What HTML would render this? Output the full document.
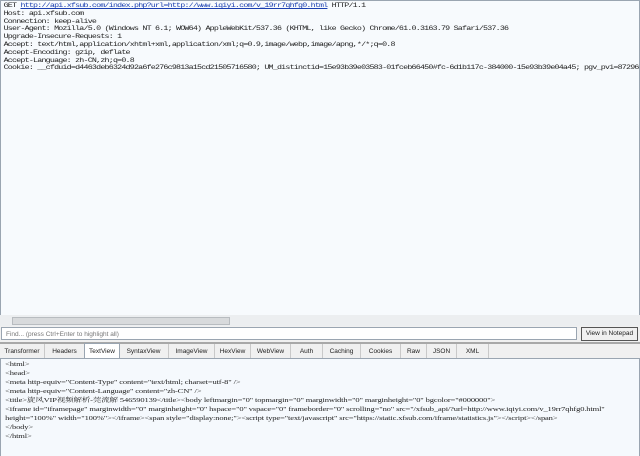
<!DOCTYPE html>
<html><head><meta charset="utf-8"><style>
body{margin:0;width:640px;height:456px;overflow:hidden;background:#f0f0f0;font-family:"Liberation Sans",sans-serif;position:relative}
.top{position:absolute;left:0;top:0;width:638px;height:314px;background:#f7fafd;border:1px solid #9aa5b1;overflow:hidden}
.top pre{margin:0;padding:1px 0 0 2px;font-family:"Liberation Mono",monospace;font-size:6.4px;line-height:7.8px;letter-spacing:-0.6px;color:#222;white-space:pre;transform:scaleX(1.3);transform-origin:0 0}
.top a{color:#1a3fb0;text-decoration:underline}
.sb{position:absolute;left:0;top:315px;width:640px;height:11px;background:#eceef0}
.thumb{position:absolute;left:12px;top:317px;width:216px;height:6px;background:#d8dadc;border:1px solid #b8bcc0}
.find{position:absolute;left:1px;top:327px;width:576px;height:13px;background:#fff;border:1px solid #9aa5b1;font-size:6.5px;color:#777;line-height:13px;padding-left:4px;box-sizing:border-box}
.btn{position:absolute;left:581px;top:327px;width:57px;height:14px;background:#f0f0f0;border:1px solid #555;box-sizing:border-box;font-size:6.5px;line-height:12px;text-align:center;color:#222}
.split{position:absolute;left:0;top:342px;width:640px;height:2px;background:#a8a8a8}
.tabs{position:absolute;left:0;top:344px;width:640px;height:14px;background:#f0f0f0;border-bottom:1px solid #9aa5b1}
.tab{position:absolute;top:0;height:14px;border-right:1px solid #c9c9c9;font-size:6.5px;line-height:15px;color:#222;text-align:center}
.sel{background:#fff;border:1px solid #9aa5b1;border-bottom:none;top:-1px}
.bot{position:absolute;left:0;top:359px;width:638px;height:97px;background:#f5f9fd;border-left:1px solid #9aa5b1;border-right:1px solid #9aa5b1;overflow:hidden}
.bot pre{margin:0;padding:0 0 0 3px;font-family:"Liberation Serif","Noto Serif CJK SC",serif;font-size:6.2px;line-height:9px;color:#222;white-space:pre;letter-spacing:-0.1px;transform:scaleX(1.37);transform-origin:0 0}
</style></head><body>
<div class="top"><pre>GET <a>http://api.xfsub.com/index.php?url=http://www.iqiyi.com/v_19rr7qhfg0.html</a> HTTP/1.1
Host: api.xfsub.com
Connection: keep-alive
User-Agent: Mozilla/5.0 (Windows NT 6.1; WOW64) AppleWebKit/537.36 (KHTML, like Gecko) Chrome/61.0.3163.79 Safari/537.36
Upgrade-Insecure-Requests: 1
Accept: text/html,application/xhtml+xml,application/xml;q=0.9,image/webp,image/apng,*/*;q=0.8
Accept-Encoding: gzip, deflate
Accept-Language: zh-CN,zh;q=0.8
Cookie: __cfduid=d4463deb6324d92a6fe276c9813a15cd21505716580; UM_distinctid=15e93b39e03583-01fceb66450#fc-6d1b117c-384000-15e93b39e04a45; pgv_pvi=87296</pre></div>
<div class="sb"></div><div class="thumb"></div>
<div class="find">Find... (press Ctrl+Enter to highlight all)</div>
<div class="btn">View in Notepad</div>
<div class="split"></div>
<div class="tabs">
<div class="tab" style="left:0;width:44px">Transformer</div>
<div class="tab" style="left:45px;width:39px">Headers</div>
<div class="tab sel" style="left:84px;width:34px">TextView</div>
<div class="tab" style="left:119px;width:49px">SyntaxView</div>
<div class="tab" style="left:169px;width:45px">ImageView</div>
<div class="tab" style="left:215px;width:35px">HexView</div>
<div class="tab" style="left:251px;width:39px">WebView</div>
<div class="tab" style="left:291px;width:31px">Auth</div>
<div class="tab" style="left:323px;width:37px">Caching</div>
<div class="tab" style="left:361px;width:39px">Cookies</div>
<div class="tab" style="left:401px;width:25px">Raw</div>
<div class="tab" style="left:427px;width:29px">JSON</div>
<div class="tab" style="left:457px;width:31px">XML</div>
</div>
<div class="bot"><pre style="padding-top:1px">&lt;html&gt;
&lt;head&gt;
&lt;meta http-equiv="Content-Type" content="text/html; charset=utf-8" /&gt;
&lt;meta http-equiv="Content-Language" content="zh-CN" /&gt;
&lt;title&gt;旋风VIP视频解析-莞流解 546590139&lt;/title&gt;&lt;body leftmargin="0" topmargin="0" marginwidth="0" marginheight="0" bgcolor="#000000"&gt;
&lt;iframe id="iframepage" marginwidth="0" marginheight="0" hspace="0" vspace="0" frameborder="0" scrolling="no" src="/xfsub_api/?url=http://www.iqiyi.com/v_19rr7qhfg0.html"
height="100%" width="100%"&gt;&lt;/iframe&gt;&lt;span style="display:none;"&gt;&lt;script type="text/javascript" src="https://static.xfsub.com/iframe/statistics.js"&gt;&lt;/script&gt;&lt;/span&gt;
&lt;/body&gt;
&lt;/html&gt;</pre></div>
</body></html>
